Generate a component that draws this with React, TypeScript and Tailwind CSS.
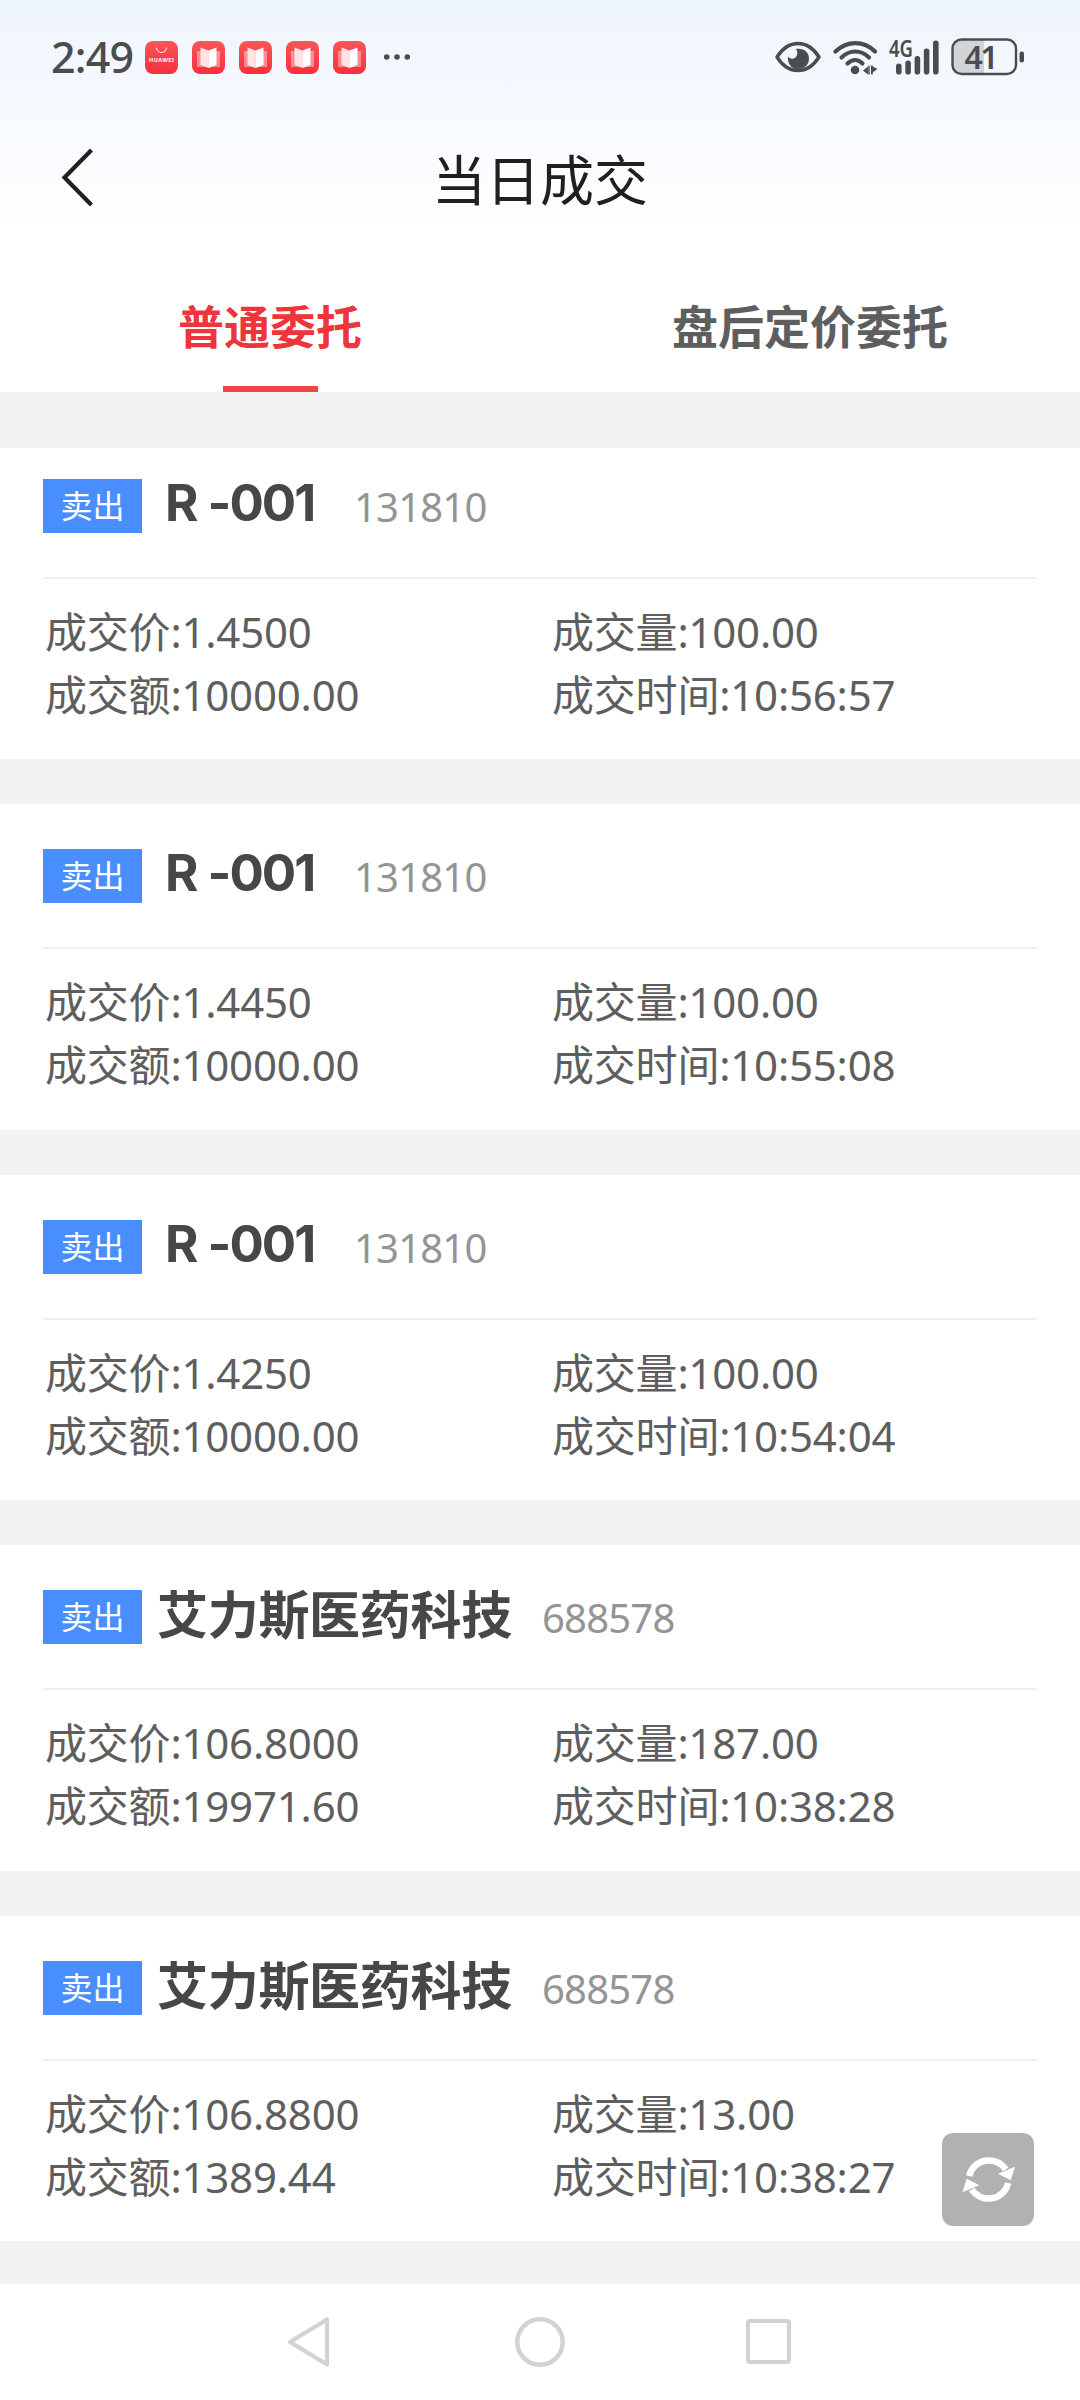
const trades = [
  { name: 'R -001', code: '131810', price: '1.4500', volume: '100.00', amount: '10000.00', time: '10:56:57' },
  { name: 'R -001', code: '131810', price: '1.4450', volume: '100.00', amount: '10000.00', time: '10:55:08' },
  { name: 'R -001', code: '131810', price: '1.4250', volume: '100.00', amount: '10000.00', time: '10:54:04' },
  { name: '艾力斯医药科技', code: '688578', price: '106.8000', volume: '187.00', amount: '19971.60', time: '10:38:28' },
  { name: '艾力斯医药科技', code: '688578', price: '106.8800', volume: '13.00', amount: '1389.44', time: '10:38:27' },
];

function BookBadge() {
  return (
    <svg width="33" height="33" viewBox="0 0 33 33">
      <rect width="33" height="33" rx="8" fill="url(#badge)" />
      <path d="M5 10h23v16H5z" fill="#fff" fillOpacity=".4" />
      <path d="M8.5 6.5 16.5 9.5V27L8.5 24z" fill="#ffe3e5" />
      <path d="M24.5 6.5 16.5 9.5V27L24.5 24z" fill="#fff" />
    </svg>
  );
}

function StatusBar() {
  return (
    <div className="flex h-[114px] items-center justify-between pl-[51px] pr-[55px] text-[#4b4c4e]">
      <div className="flex items-center">
        <span className="w-[94px] text-[43px] font-medium leading-[60px] tracking-[-0.8px]">2:49</span>
        <div className="flex items-center gap-[14px]">
          <svg width="33" height="33" viewBox="0 0 33 33">
            <defs>
              <linearGradient id="badge" x1="0" y1="0" x2="0" y2="1">
                <stop offset="0" stopColor="#fb5557" />
                <stop offset="1" stopColor="#f62f3d" />
              </linearGradient>
            </defs>
            <rect width="33" height="33" rx="8" fill="url(#badge)" />
            <path d="M11.5 6.5a5 5 0 0 0 10 0" fill="none" stroke="#fff" strokeWidth="1" />
            <text x="16.5" y="21" textAnchor="middle" fontSize="5.6" fontWeight="700" textLength="25" fill="#fff">HUAWEI</text>
          </svg>
          <BookBadge />
          <BookBadge />
          <BookBadge />
          <BookBadge />
        </div>
        <svg className="ml-[17px]" width="28" height="8" viewBox="0 0 28 8" fill="currentColor">
          <circle cx="3.7" cy="4" r="2.8" />
          <circle cx="14" cy="4" r="2.8" />
          <circle cx="24.3" cy="4" r="2.8" />
        </svg>
      </div>

      <div className="flex items-center">
        <svg width="46" height="32" viewBox="0 0 46 32">
          <path d="M2 16C7 8 14 2.5 23 2.5S39 8 44 16C39 24 32 29.5 23 29.5S7 24 2 16z" fill="none" stroke="currentColor" strokeWidth="3.4" strokeLinejoin="round" />
          <path d="M21 8c2.5 3 1.5 8.5-2.5 9.5-2.3.6-4.4-.4-5.5-2C12 22.5 16.5 28 23 28s11-4.5 11-10.5S29 7 21 8z" fill="currentColor" />
        </svg>
        <svg className="ml-[12px]" width="45" height="36" viewBox="0 0 45 36" fill="none" stroke="currentColor" strokeWidth="4.2" strokeLinecap="round">
          <path d="M2.5 12.5C14 1.2 31 1.2 42 12.5" />
          <path d="M8.5 18.5c8-8 19.5-8 27.5 0" />
          <path d="M14.5 24.5c5-4.6 10.5-4.6 15 0" />
          <circle cx="22" cy="31" r="4.3" fill="currentColor" stroke="none" />
          <path d="M30 31.5 35 27.5v8zM38 26.5v9l1.5-2 5-3.5z" fill="currentColor" stroke="none" />
          <path d="M36 26.5v9M39 26.5v9" strokeWidth="1.4" strokeLinecap="butt" />
        </svg>
        <svg className="ml-[11px] overflow-visible" width="51" height="36" viewBox="0 0 51 36" fill="currentColor">
          <text x="0" y="17.5" fontSize="23" fontWeight="600" textLength="24" lengthAdjust="spacingAndGlyphs">4G</text>
          <rect x="7" y="24.5" width="5.6" height="11" rx="2.8" />
          <rect x="16.3" y="21.5" width="5.6" height="14" rx="2.8" />
          <rect x="25.6" y="17" width="5.6" height="18.5" rx="2.8" />
          <rect x="34.8" y="9.5" width="5.6" height="26" rx="2.8" />
          <rect x="44" y="1.5" width="5.6" height="34" rx="2.8" />
        </svg>
        <svg className="ml-[11px] overflow-visible" width="74" height="38" viewBox="0 0 74 38">
          <path d="M11 2h22v34H11a9 9 0 0 1-9-9V11a9 9 0 0 1 9-9z" fill="#d1d4d8" />
          <rect x="1.5" y="1.5" width="63.5" height="34.5" rx="9" fill="none" stroke="currentColor" strokeWidth="2.4" />
          <rect x="68.5" y="13.5" width="4.5" height="11" rx="2" fill="currentColor" />
          <text x="30.5" y="30.5" textAnchor="middle" fontSize="32" fontWeight="600" fill="currentColor" textLength="34">41</text>
        </svg>
      </div>
    </div>
  );
}

export default function App() {
  return (
    <div className="flex h-[2400px] w-[1080px] flex-col overflow-hidden bg-[#f2f2f2] font-['Noto_Sans','Noto_Sans_CJK_SC',sans-serif] text-[#5e5e5e]">
      <header className="h-[393px] shrink-0 border-b border-[#ececec] bg-white bg-linear-to-b from-[#eff5fe] to-white to-60%">
        <StatusBar />
        <div className="flex h-[128px] items-center px-[60px] text-[#202020]">
          <svg className="shrink-0" width="36" height="60" viewBox="0 0 36 60" fill="none" stroke="currentColor" strokeWidth="4.2">
            <path d="M31.5 2 4.5 29.5 31.5 57" />
          </svg>
          <h1 className="flex-1 pr-[36px] pt-[3px] text-center text-[54px] leading-[80px]">当日成交</h1>
        </div>
        <nav className="flex h-[150px] text-[46px] font-bold">
          <button className="flex flex-1 flex-col items-center justify-end text-[#ed353b]">
            <span className="leading-[70px]">普通委托</span>
            <span className="mt-[25px] h-[6px] w-[95px] bg-[#f14744]" />
          </button>
          <button className="flex flex-1 flex-col items-center justify-end pb-[31px] leading-[70px]">盘后定价委托</button>
        </nav>
      </header>

      {/* 成交列表 */}
      <main className="mt-[55px] flex shrink-0 flex-col gap-[45px]">
        {trades.map((t, i) => (
          <section key={i} className={`bg-white px-[43px] ${i === 0 ? 'h-[311px] pt-[31px]' : 'h-[325.5px] pt-[45px]'}`}>
            <div className="flex h-[54px] items-center">
              <span className="flex h-[54px] w-[99px] items-center justify-center bg-[#488eff] text-[32px] leading-none text-white">卖出</span>
              <h2
                className={`pb-[6px] text-[51px] font-bold leading-[54px] text-[#474747] ${
                  t.name.startsWith('R')
                    ? "ml-[23px] w-[189px] font-['Inter','Noto_Sans_CJK_SC',sans-serif] tracking-[-2px] [word-spacing:1px]"
                    : 'ml-[15px] w-[385px] tracking-[-0.3px]'
                }`}
              >
                {t.name}
              </h2>
              <span className="pt-[2px] text-[40px] leading-[54px] tracking-[-0.8px] text-[#949494]">{t.code}</span>
            </div>
            <div className="mt-[44px] grid grid-cols-[507px_1fr] border-t-2 border-[#efefef] pl-[2px] pt-[21px] text-[42px] leading-[63px] tracking-[-0.2px]">
              <span>成交价:{t.price}</span>
              <span>成交量:{t.volume}</span>
              <span>成交额:{t.amount}</span>
              <span>成交时间:{t.time}</span>
            </div>
          </section>
        ))}
      </main>

      <button className="absolute left-[942px] top-[2133px] h-[93px] w-[92px] rounded-[11px] bg-[#b1b1b1]">
        <svg width="92" height="93" viewBox="0 0 92 93">
          {[0, 180].map((a) => (
            <g key={a} transform={`rotate(${a} 46.7 46.5)`}>
              <path d="M27.2 43a20.2 20.2 0 0 1 36.5-6.5" fill="none" stroke="#fff" strokeWidth="6.5" />
              <path d="M68.7 47.3 73 33.7 56 40.7z" fill="#fff" />
            </g>
          ))}
        </svg>
      </button>

      <footer className="mt-[43px] flex flex-1 items-center justify-center gap-[177px] bg-white">
        <svg width="52" height="52" viewBox="0 0 52 52" fill="none" stroke="#d2d2d2" strokeWidth="4.2" strokeLinejoin="round">
          <path d="M5 26 42 3.5v45z" />
        </svg>
        <svg width="52" height="52" viewBox="0 0 52 52" fill="none" stroke="#d2d2d2" strokeWidth="4.5">
          <circle cx="26" cy="26" r="22.7" />
        </svg>
        <svg width="52" height="52" viewBox="0 0 52 52" fill="none" stroke="#d2d2d2" strokeWidth="4.2">
          <rect x="5" y="5" width="41" height="41" rx="2" />
        </svg>
      </footer>
    </div>
  );
}
